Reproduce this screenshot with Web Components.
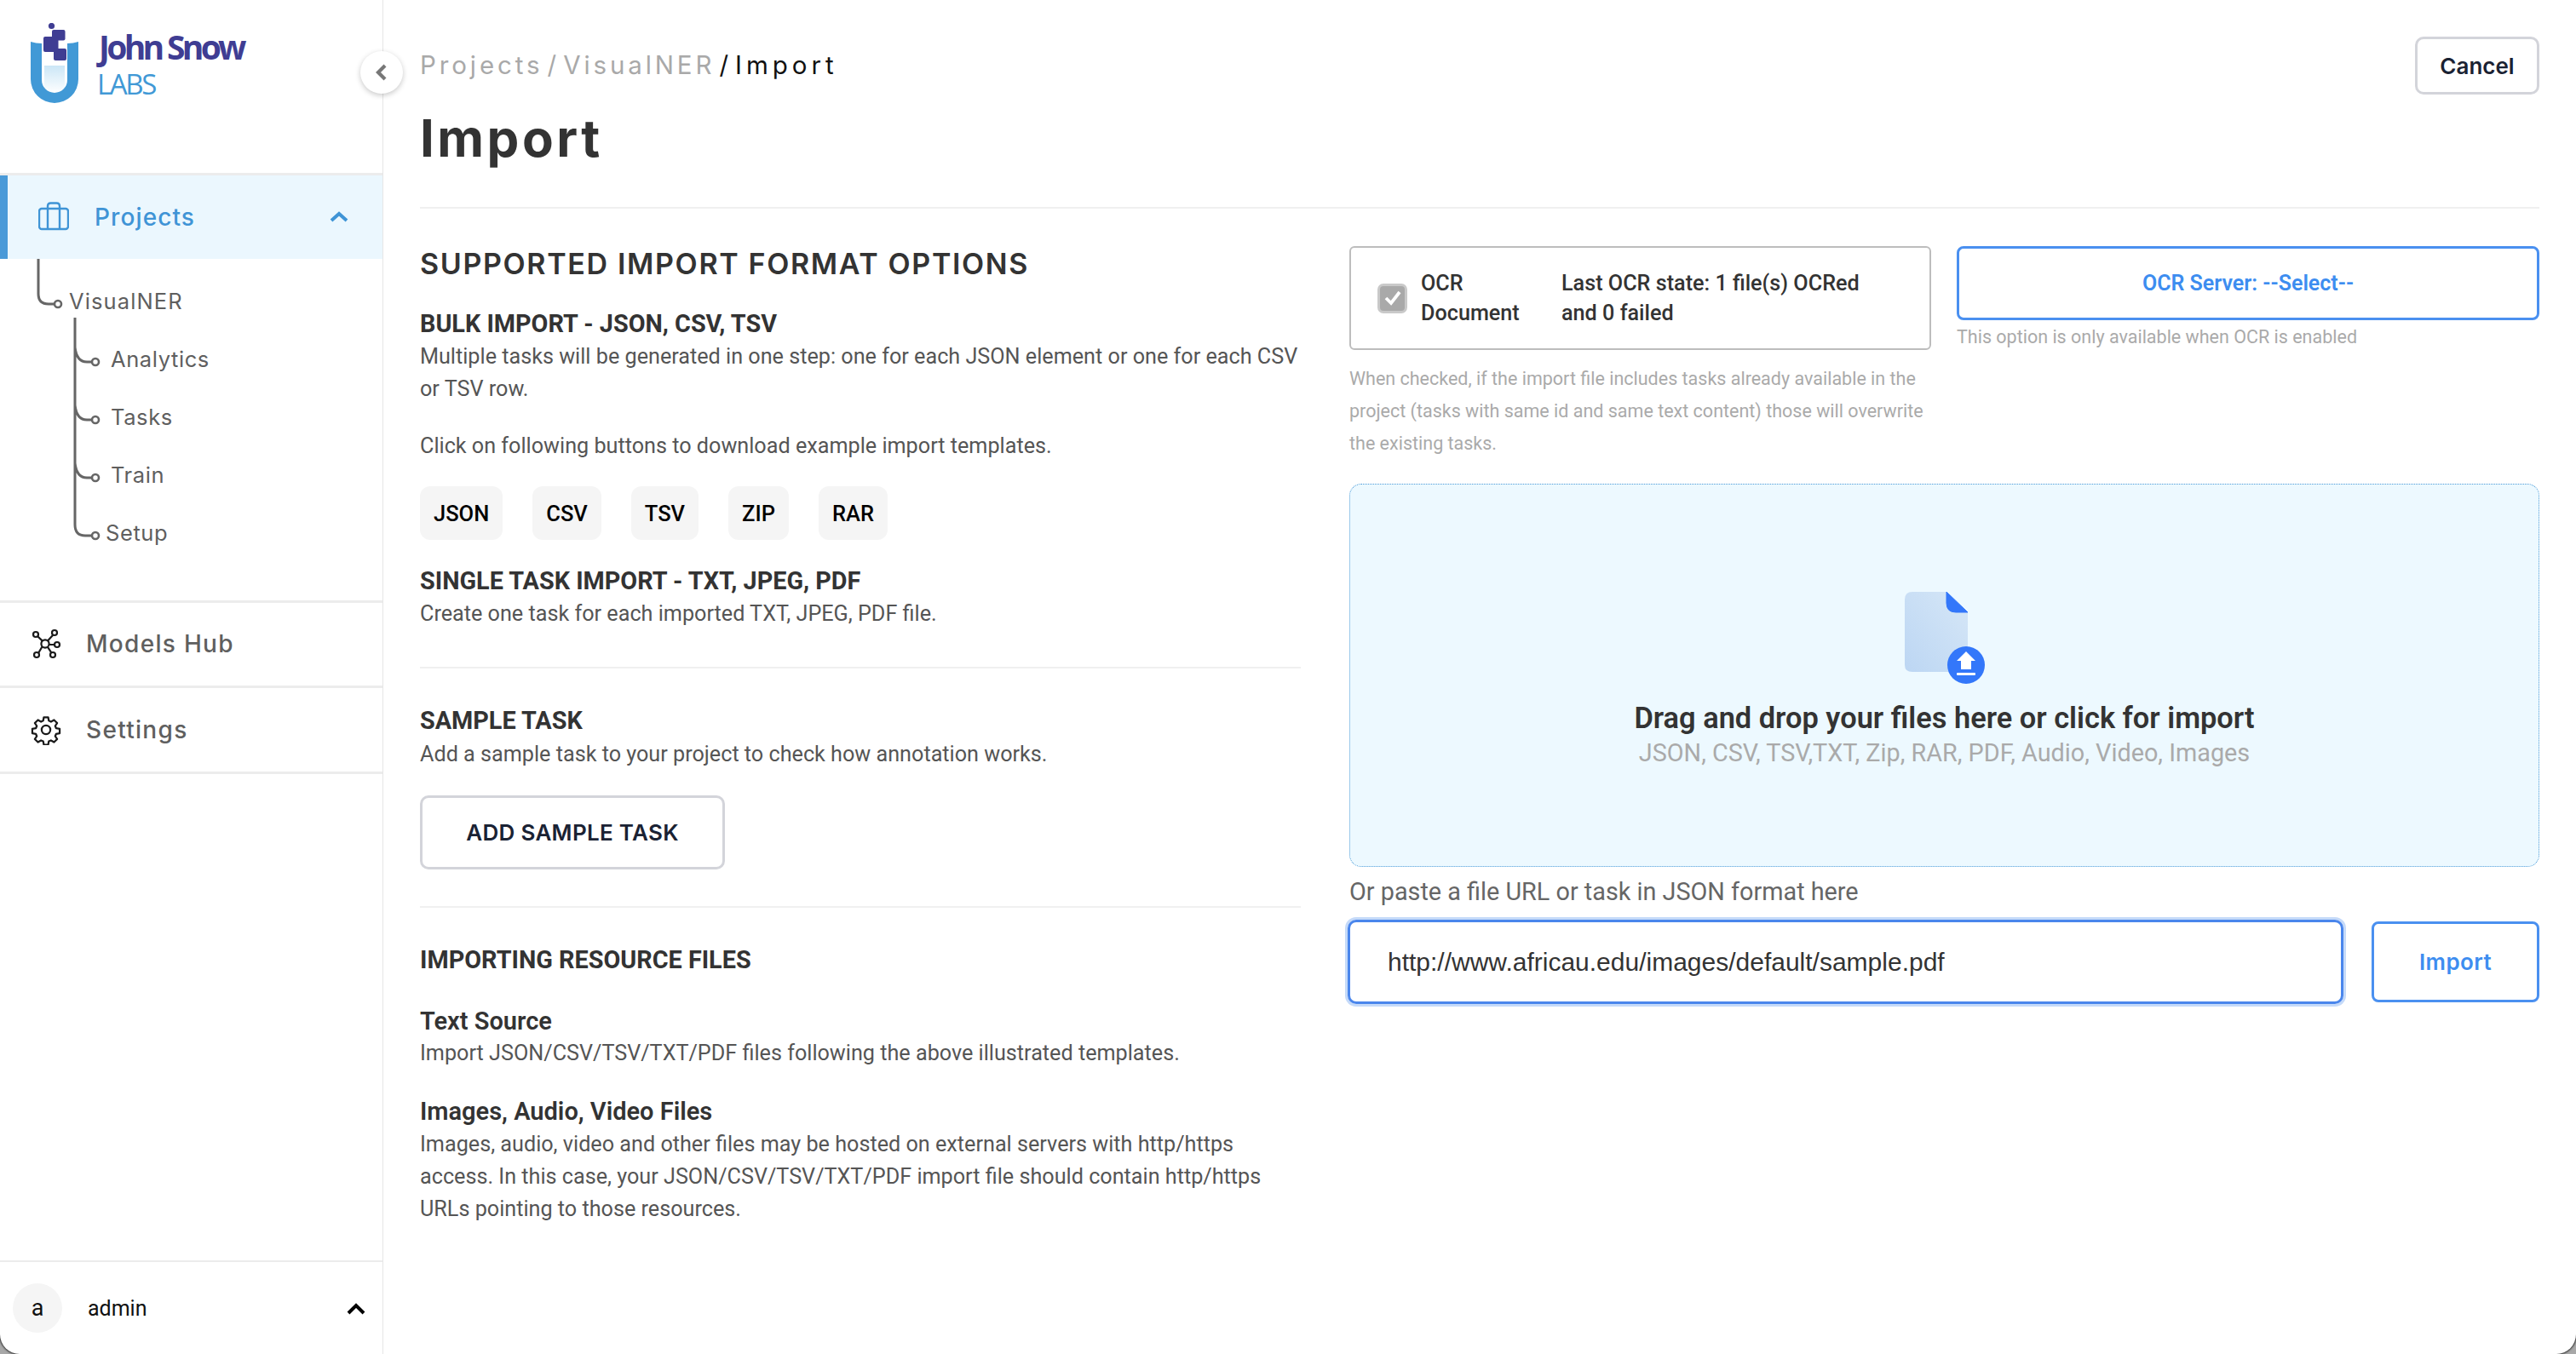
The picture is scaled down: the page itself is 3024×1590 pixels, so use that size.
<!DOCTYPE html>
<html>
<head>
<meta charset="utf-8">
<title>Import</title>
<style>
  html, body { margin: 0; height: 100%; background: #fff; }
  body { font-family: Roboto, "Liberation Sans", sans-serif; overflow: hidden; }
</style>
</head>
<body>
<jsl-app>
  <jsl-sidebar slot="side"></jsl-sidebar>
  <jsl-header slot="main"></jsl-header>
  <jsl-guide slot="main"></jsl-guide>
  <jsl-import-panel slot="main"></jsl-import-panel>
</jsl-app>
<script>
const HEAD_FONT = 'Inter, "Noto Sans", sans-serif';

class JslApp extends HTMLElement {
  constructor() {
    super();
    this.attachShadow({ mode: 'open' });
    this.shadowRoot.innerHTML = `
      <style>
        :host { display: grid; grid-template-columns: 449px 1fr; height: 1590px; position: relative; overflow: hidden; }
        .main { border-left: 1px solid #e6e6e6; padding: 0 43px 0 43px; display: grid; grid-template-columns: 1034px 1397px; column-gap: 57px; grid-template-rows: 245px 1fr; align-content: start; }
        .corner { position: absolute; bottom: 0; width: 23px; height: 23px; background: #a8a8a8; overflow: hidden; z-index: 3; }
        .corner::after { content: ''; display: block; width: 100%; height: 100%; background: #fff; box-shadow: 0 0 2px 1px #333; }
        .corner.l { left: 0; } .corner.l::after { border-bottom-left-radius: 23px; }
        .corner.r { right: 0; } .corner.r::after { border-bottom-right-radius: 23px; }
      </style>
      <slot name="side"></slot>
      <div class="main"><slot name="main"></slot></div>
      <div class="corner l"></div><div class="corner r"></div>
    `;
  }
}

class JslLogo extends HTMLElement {
  constructor() {
    super();
    this.attachShadow({ mode: 'open' });
    this.shadowRoot.innerHTML = `
      <style>
        :host { display: flex; height: 203px; box-sizing: border-box; padding: 27px 0 0 36px; gap: 22px; font-family: "Open Sans", sans-serif; }
        svg { width: 58px; height: 96px; flex: none; }
        .t { display: flex; flex-direction: column; padding-top: 5px; }
        .a { font-size: 39px; line-height: 46px; font-weight: 700; letter-spacing: -3.7px; color: #3f3d93; }
        .b { font-size: 33px; line-height: 42px; font-weight: 400; letter-spacing: -2.4px; color: #4199d6; margin-left: -2px; }
      </style>
      <svg viewBox="36 27 58 96">
        <defs><linearGradient id="lq" x1="0" y1="0" x2="0" y2="1"><stop offset="0" stop-color="#cbe6f6"/><stop offset="1" stop-color="#fff"/></linearGradient></defs>
        <rect x="52" y="77" width="24" height="33" fill="url(#lq)"/>
        <path d="M36 49 Q42 51 49 51 V94 A15 15 0 0 0 79 94 V51 Q86 51 92 49 V93 A28 28 0 0 1 36 93 Z" fill="#4199d6"/>
        <circle cx="60.5" cy="30.5" r="3.6" fill="#3f3d93"/>
        <rect x="61" y="35" width="15.5" height="12.5" rx="2" fill="#3f3d93"/>
        <rect x="51" y="43" width="17.5" height="18" rx="2" fill="#3f3d93"/>
        <rect x="63" y="57" width="15" height="14" rx="2" fill="#3f3d93"/>
      </svg>
      <div class="t"><div class="a">John Snow</div><div class="b">LABS</div></div>
    `;
  }
}

class JslNavItem extends HTMLElement {
  constructor() {
    super();
    this.attachShadow({ mode: 'open' });
    const active = this.hasAttribute('active');
    this.shadowRoot.innerHTML = `
      <style>
        :host { display: flex; align-items: center; box-sizing: border-box; height: 97.5px; flex: none; position: relative;
          font-family: ${HEAD_FONT}; font-size: 28px; font-weight: 500; letter-spacing: ${active ? 1.1 : 1.3}px;
          color: ${active ? '#3f94d6' : '#5f5f5f'}; background: ${active ? '#ebf7fe' : '#fff'};
          border-left: ${active ? '9px solid #4a9ad8' : '0'}; padding-left: 36px; }
        .ic { width: 36px; height: 36px; flex: none; display: flex; }
        .lb { margin-left: ${active ? '30px' : '29px'}; }
        ::slotted(svg) { display: block; }
        .ch { position: absolute; right: 40px; top: 42px; }
      </style>
      <div class="ic"><slot name="icon"></slot></div>
      <div class="lb"><slot></slot></div>
      ${active ? '<svg class="ch" width="22" height="13" viewBox="0 0 22 13"><path d="M2 11 L11 3 L20 11" fill="none" stroke="#3f94d6" stroke-width="4"/></svg>' : ''}
    `;
  }
}

class JslTreeRow extends HTMLElement {
  constructor() {
    super();
    this.attachShadow({ mode: 'open' });
    const start = this.hasAttribute('first') ? -13 : 0;
    const line = this.hasAttribute('last') ? `M2 ${start} V26 Q2 39 14 39 H22` : `M2 ${start} V68 M2 22 Q4 39 16 39 H22`;
    this.shadowRoot.innerHTML = `
      <style>
        :host { display: flex; height: 68px; flex: none; align-items: center; margin-left: 86px; font-family: ${HEAD_FONT}; font-size: 25.5px; letter-spacing: .6px; color: #5f5f5f; position: relative; }
        svg { position: absolute; left: 0; top: -2px; overflow: visible; }
        .t { margin-left: var(--tx, 44px); }
      </style>
      <svg width="32" height="68"><path d="${line}" fill="none" stroke="#666" stroke-width="3"/><circle cx="26" cy="39" r="4" fill="#fff" stroke="#666" stroke-width="2.6"/></svg>
      <div class="t"><slot></slot></div>
    `;
  }
}

class JslSidebar extends HTMLElement {
  constructor() {
    super();
    this.attachShadow({ mode: 'open' });
    this.shadowRoot.innerHTML = `
      <style>
        :host { display: flex; flex-direction: column; height: 1590px; position: relative; font-family: Roboto, sans-serif; }
        .sep { border-top: 3px solid #ececec; flex: none; }
        .tree { height: 401px; flex: none; box-sizing: border-box; display: flex; flex-direction: column; }
        .root { display: flex; align-items: center; height: 84px; flex: none; box-sizing: border-box; padding-top: 15px; margin-left: 43px; position: relative; font-family: ${HEAD_FONT}; font-size: 25.5px; letter-spacing: 1.1px; color: #5f5f5f; }
        .root svg { position: absolute; left: 0; top: 0; overflow: visible; }
        .root span { margin-left: 38px; }
        .spacer { flex: 1; }
        .user { height: 110px; flex: none; border-top: 2px solid #ececec; box-sizing: border-box; display: flex; align-items: center; padding: 0 0 0 15px; font-size: 25px; color: #111; position: relative; }
        .av { width: 58px; height: 58px; border-radius: 50%; background: #f5f5f5; display: flex; align-items: center; justify-content: center; font-size: 27px; }
        .name { margin-left: 30px; }
        .up { position: absolute; right: 20px; top: 48px; }
        .toggle { position: absolute; left: 423px; top: 60px; width: 50px; height: 50px; border-radius: 50%; background: #fff; box-shadow: 0 2px 6px rgba(0,0,0,.22); display: flex; align-items: center; justify-content: center; z-index: 2; }
      </style>
      <jsl-logo></jsl-logo>
      <div class="sep"></div>
      <jsl-nav-item active>
        <svg slot="icon" width="36" height="36" viewBox="0 0 36 36" fill="none" stroke="#3f94d6" stroke-width="2.4"><rect x="1" y="8" width="34" height="24" rx="3"/><path d="M11 32 V5 Q11 1.5 14.5 1.5 H21.5 Q25 1.5 25 5 V32"/></svg>
        Projects
      </jsl-nav-item>
      <div class="tree">
        <div class="root">
          <svg width="40" height="84"><path d="M2 0 V41 Q2 53 14 53 H21" fill="none" stroke="#666" stroke-width="3"/><circle cx="25" cy="53" r="4" fill="#fff" stroke="#666" stroke-width="2.6"/></svg>
          <span>VisualNER</span>
        </div>
        <jsl-tree-row first>Analytics</jsl-tree-row>
        <jsl-tree-row>Tasks</jsl-tree-row>
        <jsl-tree-row>Train</jsl-tree-row>
        <jsl-tree-row last style="--tx:38px">Setup</jsl-tree-row>
      </div>
      <div class="sep"></div>
      <jsl-nav-item>
        <svg slot="icon" width="36" height="36" viewBox="0 0 36 36" fill="none" stroke="#1a1a1a" stroke-width="2.2"><circle cx="17" cy="18" r="4.6"/><circle cx="6" cy="7" r="3"/><circle cx="28" cy="5" r="3"/><circle cx="31" cy="19" r="3"/><circle cx="7" cy="31" r="3"/><circle cx="26" cy="31" r="3"/><path d="M8.2 9.2 L13.8 14.6 M26.4 7.6 L20 14.4 M28 19 H21.6 M9 29 L13.6 21.2 M24.4 28.6 L20 21.8"/></svg>
        Models Hub
      </jsl-nav-item>
      <div class="sep"></div>
      <jsl-nav-item>
        <svg slot="icon" width="36" height="36" viewBox="0 0 24 24" fill="none" stroke="#1a1a1a" stroke-width="1.5" stroke-linejoin="round"><circle cx="12" cy="12" r="3.4"/><path d="M10.3 2.2h3.4l.5 2.7 1.7.8 2.4-1.4 2.4 2.4-1.5 2.3.7 1.7 2.8.6v3.4l-2.8.6-.7 1.7 1.5 2.3-2.4 2.4-2.4-1.4-1.7.7-.5 2.7h-3.4l-.5-2.7-1.7-.7-2.4 1.4-2.4-2.4 1.5-2.3-.7-1.7-2.8-.6v-3.4l2.8-.6.7-1.7L3.3 6.7l2.4-2.4 2.4 1.4 1.7-.8z"/></svg>
        Settings
      </jsl-nav-item>
      <div class="sep"></div>
      <div class="spacer"></div>
      <div class="user">
        <div class="av">a</div><div class="name">admin</div>
        <svg class="up" width="22" height="14" viewBox="0 0 22 14"><path d="M2 12 L11 3 L20 12" fill="none" stroke="#000" stroke-width="4"/></svg>
      </div>
      <div class="toggle"><svg width="14" height="20" viewBox="0 0 14 20"><path d="M11 2 L3 10 L11 18" fill="none" stroke="#777" stroke-width="4.2"/></svg></div>
    `;
  }
}

class JslHeader extends HTMLElement {
  constructor() {
    super();
    this.attachShadow({ mode: 'open' });
    this.shadowRoot.innerHTML = `
      <style>
        :host { display: flex; grid-column: 1 / 3; justify-content: space-between; border-bottom: 2px solid #f0f0f0; box-sizing: border-box; height: 245px; font-family: ${HEAD_FONT}; }
        .crumb { font-size: 29.5px; letter-spacing: 3.9px; line-height: 34px; margin-top: 59px; color: #a9a9a9; white-space: nowrap; }
        .crumb b { font-weight: 400; color: #111; letter-spacing: 5px; }
        .crumb i { font-style: normal; letter-spacing: 0; margin: 0 8px 0 5px; }
        h1 { margin: 33px 0 0; font-size: 60px; line-height: 72px; font-weight: 700; color: #333; letter-spacing: 3.5px; }
        button { width: 146px; height: 68px; margin-top: 43px; border: 3px solid #d3d4da; border-radius: 10px; background: #fff; font: 600 26px ${HEAD_FONT}; color: #1a2233; padding: 0; }
      </style>
      <div>
        <div class="crumb">Projects<i>/</i>VisualNER<b><i>/</i>Import</b></div>
        <h1>Import</h1>
      </div>
      <button>Cancel</button>
    `;
  }
}

class JslChip extends HTMLElement {
  constructor() {
    super();
    this.attachShadow({ mode: 'open' });
    this.shadowRoot.innerHTML = `
      <style>
        :host { display: flex; align-items: center; justify-content: center; height: 63px; padding: 0 16px; background: #f5f5f5; border-radius: 12px; font-size: 25.5px; font-weight: 500; color: #000; }
      </style>
      <slot></slot>
    `;
  }
}

class JslGuide extends HTMLElement {
  constructor() {
    super();
    this.attachShadow({ mode: 'open' });
    this.shadowRoot.innerHTML = `
      <style>
        :host { display: block; font-size: 25.2px; line-height: 38px; color: #555; }
        h2 { margin: 46px 0 0; font: 600 34px/38px ${HEAD_FONT}; color: #333; letter-spacing: 1.65px; }
        h3 { margin: 0; font-size: 28.8px; line-height: 38px; font-weight: 700; color: #333; }
        h4 { margin: 0; font-size: 29px; line-height: 38px; font-weight: 600; color: #333; }
        p { margin: 0; }
        .chips { display: flex; gap: 35px; margin-top: 28px; }
        hr { border: 0; border-top: 2px solid #f0f0f0; margin: 0; }
        .sample { width: 358px; height: 87px; box-sizing: border-box; border: 3px solid #d3d4da; border-radius: 10px; background: #fff; font: 600 26px ${HEAD_FONT}; letter-spacing: .3px; color: #1a2233; padding: 0; display: block; margin-top: 29px; }
      </style>
      <h2>SUPPORTED IMPORT FORMAT OPTIONS</h2>
      <h3 style="margin-top:32px">BULK IMPORT - JSON, CSV, TSV</h3>
      <p style="margin-top:1px">Multiple tasks will be generated in one step: one for each JSON element or one for each CSV or TSV row.</p>
      <p style="margin-top:29px">Click on following buttons to download example import templates.</p>
      <div class="chips"><jsl-chip>JSON</jsl-chip><jsl-chip>CSV</jsl-chip><jsl-chip>TSV</jsl-chip><jsl-chip>ZIP</jsl-chip><jsl-chip>RAR</jsl-chip></div>
      <h3 style="margin-top:29px">SINGLE TASK IMPORT - TXT, JPEG, PDF</h3>
      <p style="margin-top:1px">Create one task for each imported TXT, JPEG, PDF file.</p>
      <hr style="margin-top:43px">
      <h3 style="margin-top:42px">SAMPLE TASK</h3>
      <p style="margin-top:2px">Add a sample task to your project to check how annotation works.</p>
      <button class="sample">ADD SAMPLE TASK</button>
      <hr style="margin-top:43px">
      <h3 style="margin-top:42px">IMPORTING RESOURCE FILES</h3>
      <h4 style="margin-top:34px">Text Source</h4>
      <p>Import JSON/CSV/TSV/TXT/PDF files following the above illustrated templates.</p>
      <h4 style="margin-top:30px">Images, Audio, Video Files</h4>
      <p style="margin-top:1px">Images, audio, video and other files may be hosted on external servers with http/https access. In this case, your JSON/CSV/TSV/TXT/PDF import file should contain http/https URLs pointing to those resources.</p>
    `;
  }
}

class JslDropzone extends HTMLElement {
  constructor() {
    super();
    this.attachShadow({ mode: 'open' });
    this.shadowRoot.innerHTML = `
      <style>
        :host { display: flex; flex-direction: column; align-items: center; height: 450px; box-sizing: border-box; background: #edf9ff; border: 1px dotted #4a9ad8; border-radius: 14px; padding-top: 126px; }
        svg { display: block; margin-left: 2px; }
        .a { font-size: 34.4px; line-height: 42px; font-weight: 600; color: #333; margin-top: 11px; }
        .b { font-size: 28.8px; line-height: 38px; color: #aaa; margin-top: 1px; }
      </style>
      <svg width="96" height="116" viewBox="0 0 96 116">
        <defs><linearGradient id="dg" x1="1" y1="0" x2="0" y2="1"><stop offset="0" stop-color="#d6e7f7"/><stop offset="1" stop-color="#bcd6f3"/></linearGradient></defs>
        <path d="M9 0 H49 L74 24 V86 Q74 94 66 94 H9 Q0 94 0 86 V9 Q0 0 9 0 Z" fill="url(#dg)"/>
        <path d="M49 0 L74 24 H60 Q49 24 49 13 Z" fill="#3377fa" stroke="#3377fa" stroke-width="1" stroke-linejoin="round"/>
        <circle cx="72" cy="86" r="22" fill="#3377fa"/>
        <path d="M72 70 L83 81 H78 V91 H66 V81 H61 Z" fill="#fff"/>
        <rect x="61" y="95" width="22" height="3" rx="1" fill="#fff"/>
      </svg>
      <div class="a">Drag and drop your files here or click for import</div>
      <div class="b">JSON, CSV, TSV,TXT, Zip, RAR, PDF, Audio, Video, Images</div>
    `;
  }
}

class JslImportPanel extends HTMLElement {
  constructor() {
    super();
    this.attachShadow({ mode: 'open' });
    this.shadowRoot.innerHTML = `
      <style>
        :host { display: block; padding-top: 44px; font-size: 25.2px; color: #333; }
        .top { display: grid; grid-template-columns: 683px 684px; column-gap: 30px; }
        .ocr { height: 122px; box-sizing: border-box; border: 2px solid #bdbdbd; border-radius: 6px; display: flex; align-items: center; padding-left: 31px; line-height: 35px; font-weight: 500; }
        .cb { width: 35px; height: 35px; box-sizing: border-box; background: #a9a9a9; border: 3px solid #c9c9c9; border-radius: 7px; flex: none; margin-right: 16px; display: flex; align-items: center; justify-content: center; }
        .l1 { width: 165px; flex: none; }
        .server { height: 87px; box-sizing: border-box; border: 3px solid #4a90f0; border-radius: 8px; background: #fff; display: flex; align-items: center; justify-content: center; color: #3d8df0; font-weight: 600; font-size: 25px; }
        .hint { font-size: 21.5px; line-height: 38px; color: #aaa; }
        .under { margin: 15px 0 0; }
        .lbl { font-size: 28.8px; line-height: 38px; color: #666; margin: 10px 0 14px; }
        .row { display: flex; justify-content: space-between; align-items: center; }
        .input { margin-left: -2px; width: 1169px; height: 99px; box-sizing: border-box; border: 3px solid #4a86ec; border-radius: 10px; box-shadow: 0 0 0 3px #c5daf9; display: flex; align-items: center; padding-left: 44px; font: 30px "Liberation Sans", sans-serif; color: #333; }
        .go { width: 197px; height: 95px; box-sizing: border-box; border: 3px solid #4a90f0; border-radius: 8px; background: #fff; color: #3d8df0; font: 600 26px ${HEAD_FONT}; letter-spacing: .4px; padding: 0; }
        jsl-dropzone { margin-top: 28px; }
      </style>
      <div class="top">
        <div>
          <div class="ocr">
            <div class="cb"><svg width="22" height="20" viewBox="0 0 22 20"><path d="M3 10 L9 16 L19 3" fill="none" stroke="#fff" stroke-width="3.8"/></svg></div>
            <div class="l1">OCR<br>Document</div>
            <div>Last OCR state: 1 file(s) OCRed<br>and 0 failed</div>
          </div>
          <div class="hint under">When checked, if the import file includes tasks already available in the project (tasks with same id and same text content) those will overwrite the existing tasks.</div>
        </div>
        <div>
          <div class="server">OCR Server: --Select--</div>
          <div class="hint" style="margin-top:1px">This option is only available when OCR is enabled</div>
        </div>
      </div>
      <jsl-dropzone></jsl-dropzone>
      <div class="lbl">Or paste a file URL or task in JSON format here</div>
      <div class="row">
        <div class="input">http://www.africau.edu/images/default/sample.pdf</div>
        <button class="go">Import</button>
      </div>
    `;
  }
}

customElements.define('jsl-app', JslApp);
customElements.define('jsl-logo', JslLogo);
customElements.define('jsl-nav-item', JslNavItem);
customElements.define('jsl-tree-row', JslTreeRow);
customElements.define('jsl-sidebar', JslSidebar);
customElements.define('jsl-header', JslHeader);
customElements.define('jsl-chip', JslChip);
customElements.define('jsl-guide', JslGuide);
customElements.define('jsl-dropzone', JslDropzone);
customElements.define('jsl-import-panel', JslImportPanel);
</script>
</body>
</html>
